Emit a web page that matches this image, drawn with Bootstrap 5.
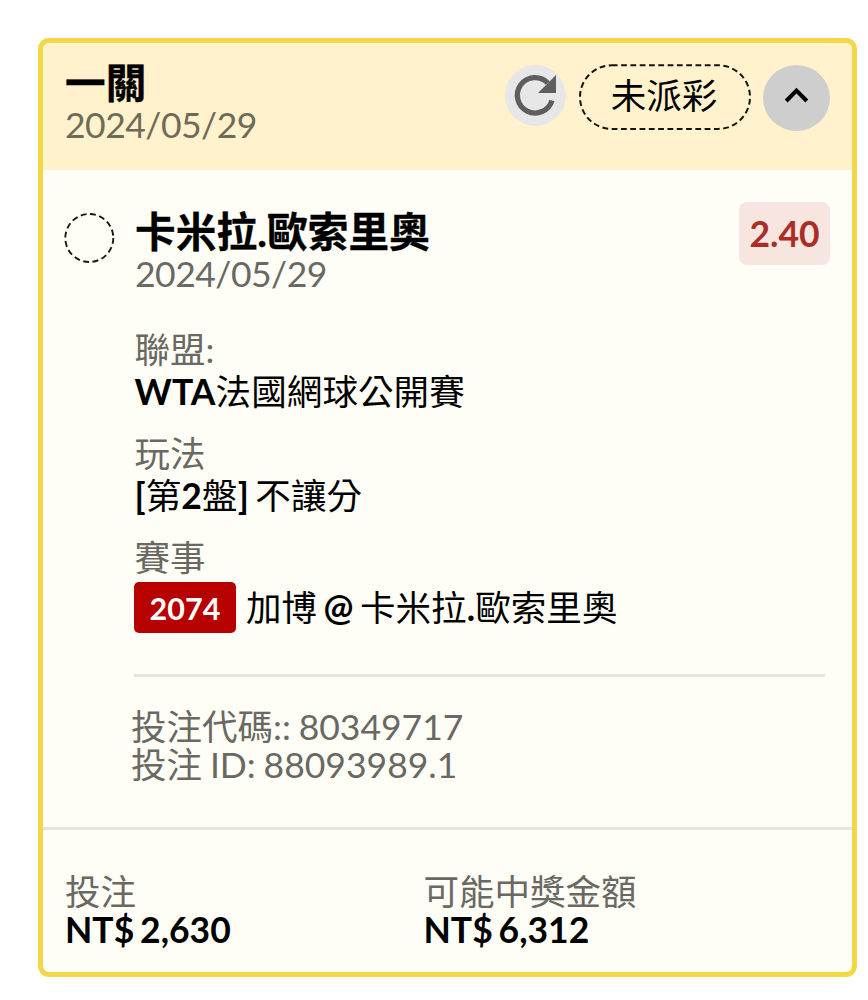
<!DOCTYPE html>
<html lang="zh-Hant">
<head>
<meta charset="utf-8">
<meta name="viewport" content="width=device-width, initial-scale=1">
<title>投注</title>
<link href="https://cdn.jsdelivr.net/npm/bootstrap@5.3.0/dist/css/bootstrap.min.css" rel="stylesheet">
<style>
body{background:#fff;color:#000;font-family:Lato,"Noto Sans CJK TC",sans-serif;font-size:35.5px;line-height:42px;word-spacing:-2.8px;white-space:nowrap;overflow:hidden}
.slip{width:819px;height:939px;margin:38px 0 0 38px;border:5px solid #f4d747;border-radius:11px;background:#fffef6;overflow:hidden}
.slip-head{background:#fff2cc;height:127px;padding:18px 22px 0 22px}
.heading{font-size:40.6px;line-height:43px;font-weight:700;letter-spacing:.15px;-webkit-text-stroke:.4px #000}
.muted{color:#696862}
.slip-head .muted{color:#6f6a58}
.date{line-height:40px;letter-spacing:-.5px;padding-top:1px}
.tools{padding-top:4px;gap:13px}
.refresh{width:61px;height:61px;background:#e7e7e7}
.state{width:172px;height:66px;margin-top:-1px;margin-right:-1px;padding-bottom:2px;padding-right:2px}
.toggle{width:67px;height:66px;background:#cfcecf}
.slip-body{height:660px;padding:32px 22px 0 21px;border-bottom:3px solid #e5e3dd}
.mark-col{width:70px;padding-top:10px}
.odds{width:91px;height:63px;border-radius:8px;background:#f7e6e0;color:#ac2c26;font-weight:700}
.heading-col{padding:8px 0 0 1px}
.fields{padding-top:34.5px}
.field-group{margin-bottom:20.4px}
.field-group>div,.label{padding-left:.5px}
.field-value{position:static;padding-top:.6px;margin-bottom:-.6px;letter-spacing:.1px}
.match{margin-top:3px}
.code{width:102px;height:51px;border-radius:5px;background:#b70000;color:#fff;font-size:30.5px}
.teams{margin-left:10px;padding-top:1px;letter-spacing:.08px}
.rule{height:3px;background:#e5e3dd;width:691px;margin-top:40.5px}
.ids{line-height:38px;margin:31.5px 0 0 -3px;word-spacing:-1.2px}
.slip-foot{line-height:38px;padding:42.6px 22px 0 22px}
.stake{width:358.5px}
</style>
</head>
<body>
<main class="slip">
  <header class="slip-head d-flex justify-content-between">
    <div>
      <div class="heading">一關</div>
      <div class="date muted">2024/05/29</div>
    </div>
    <div class="tools d-flex align-items-start">
      <div class="refresh rounded-circle">
        <svg class="d-block" width="61" height="61" viewBox="0 0 61 61"><path d="M47 35.4A17.7 17.7 0 1 1 42.8 18" fill="none" stroke="#5e5e5e" stroke-width="5.3"/><path d="M51 10v18H33z" fill="#5e5e5e"/></svg>
      </div>
      <div class="state position-relative d-flex align-items-center justify-content-center">
        <svg class="position-absolute top-0 start-0" width="172" height="66"><rect x="1" y="1.3" width="170" height="63.6" rx="31.8" fill="none" stroke="#15130c" stroke-width="2" stroke-dasharray="5.8 3.5"/></svg>
        <span>未派彩</span>
      </div>
      <div class="toggle rounded-circle">
        <svg class="d-block" width="67" height="66"><path d="M23.2 36L33.5 25.5l10.3 10.5" fill="none" stroke="#000" stroke-width="4"/></svg>
      </div>
    </div>
  </header>
  <section class="slip-body d-flex">
    <div class="mark-col">
      <svg class="d-block" width="51" height="51"><circle cx="25.3" cy="26" r="24" fill="none" stroke="#171717" stroke-width="1.9" stroke-dasharray="5.9 3.525"/></svg>
    </div>
    <div class="flex-grow-1">
      <div class="d-flex justify-content-between">
        <div class="heading-col">
          <div class="heading">卡米拉.歐索里奧</div>
          <div class="date muted">2024/05/29</div>
        </div>
        <div class="odds d-flex align-items-center justify-content-center">2.40</div>
      </div>
      <div class="fields">
        <div class="field-group">
          <div class="muted">聯盟:</div>
          <div class="field-value"><span class="fw-bold">WTA</span>法國網球公開賽</div>
        </div>
        <div class="field-group">
          <div class="muted">玩法</div>
          <div class="field-value"><span class="fw-bold">[</span>第<span class="fw-bold">2</span>盤<span class="fw-bold">]</span> 不讓分</div>
        </div>
        <div class="label muted">賽事</div>
        <div class="match d-flex align-items-center">
          <div class="code fw-bold d-flex align-items-center justify-content-center">2074</div>
          <div class="teams">加博 <span class="fw-bold">@</span> 卡米拉<span class="fw-bold">.</span>歐索里奧</div>
        </div>
      </div>
      <div class="rule"></div>
      <div class="ids muted">
        <div>投注代碼:: 80349717</div>
        <div>投注 ID: 88093989.1</div>
      </div>
    </div>
  </section>
  <footer class="slip-foot d-flex">
    <div class="stake">
      <div class="muted">投注</div>
      <div class="fw-bold">NT$ 2,630</div>
    </div>
    <div>
      <div class="muted">可能中獎金額</div>
      <div class="fw-bold">NT$ 6,312</div>
    </div>
  </footer>
</main>
<script src="https://cdn.jsdelivr.net/npm/bootstrap@5.3.0/dist/js/bootstrap.bundle.min.js"></script>
</body>
</html>
